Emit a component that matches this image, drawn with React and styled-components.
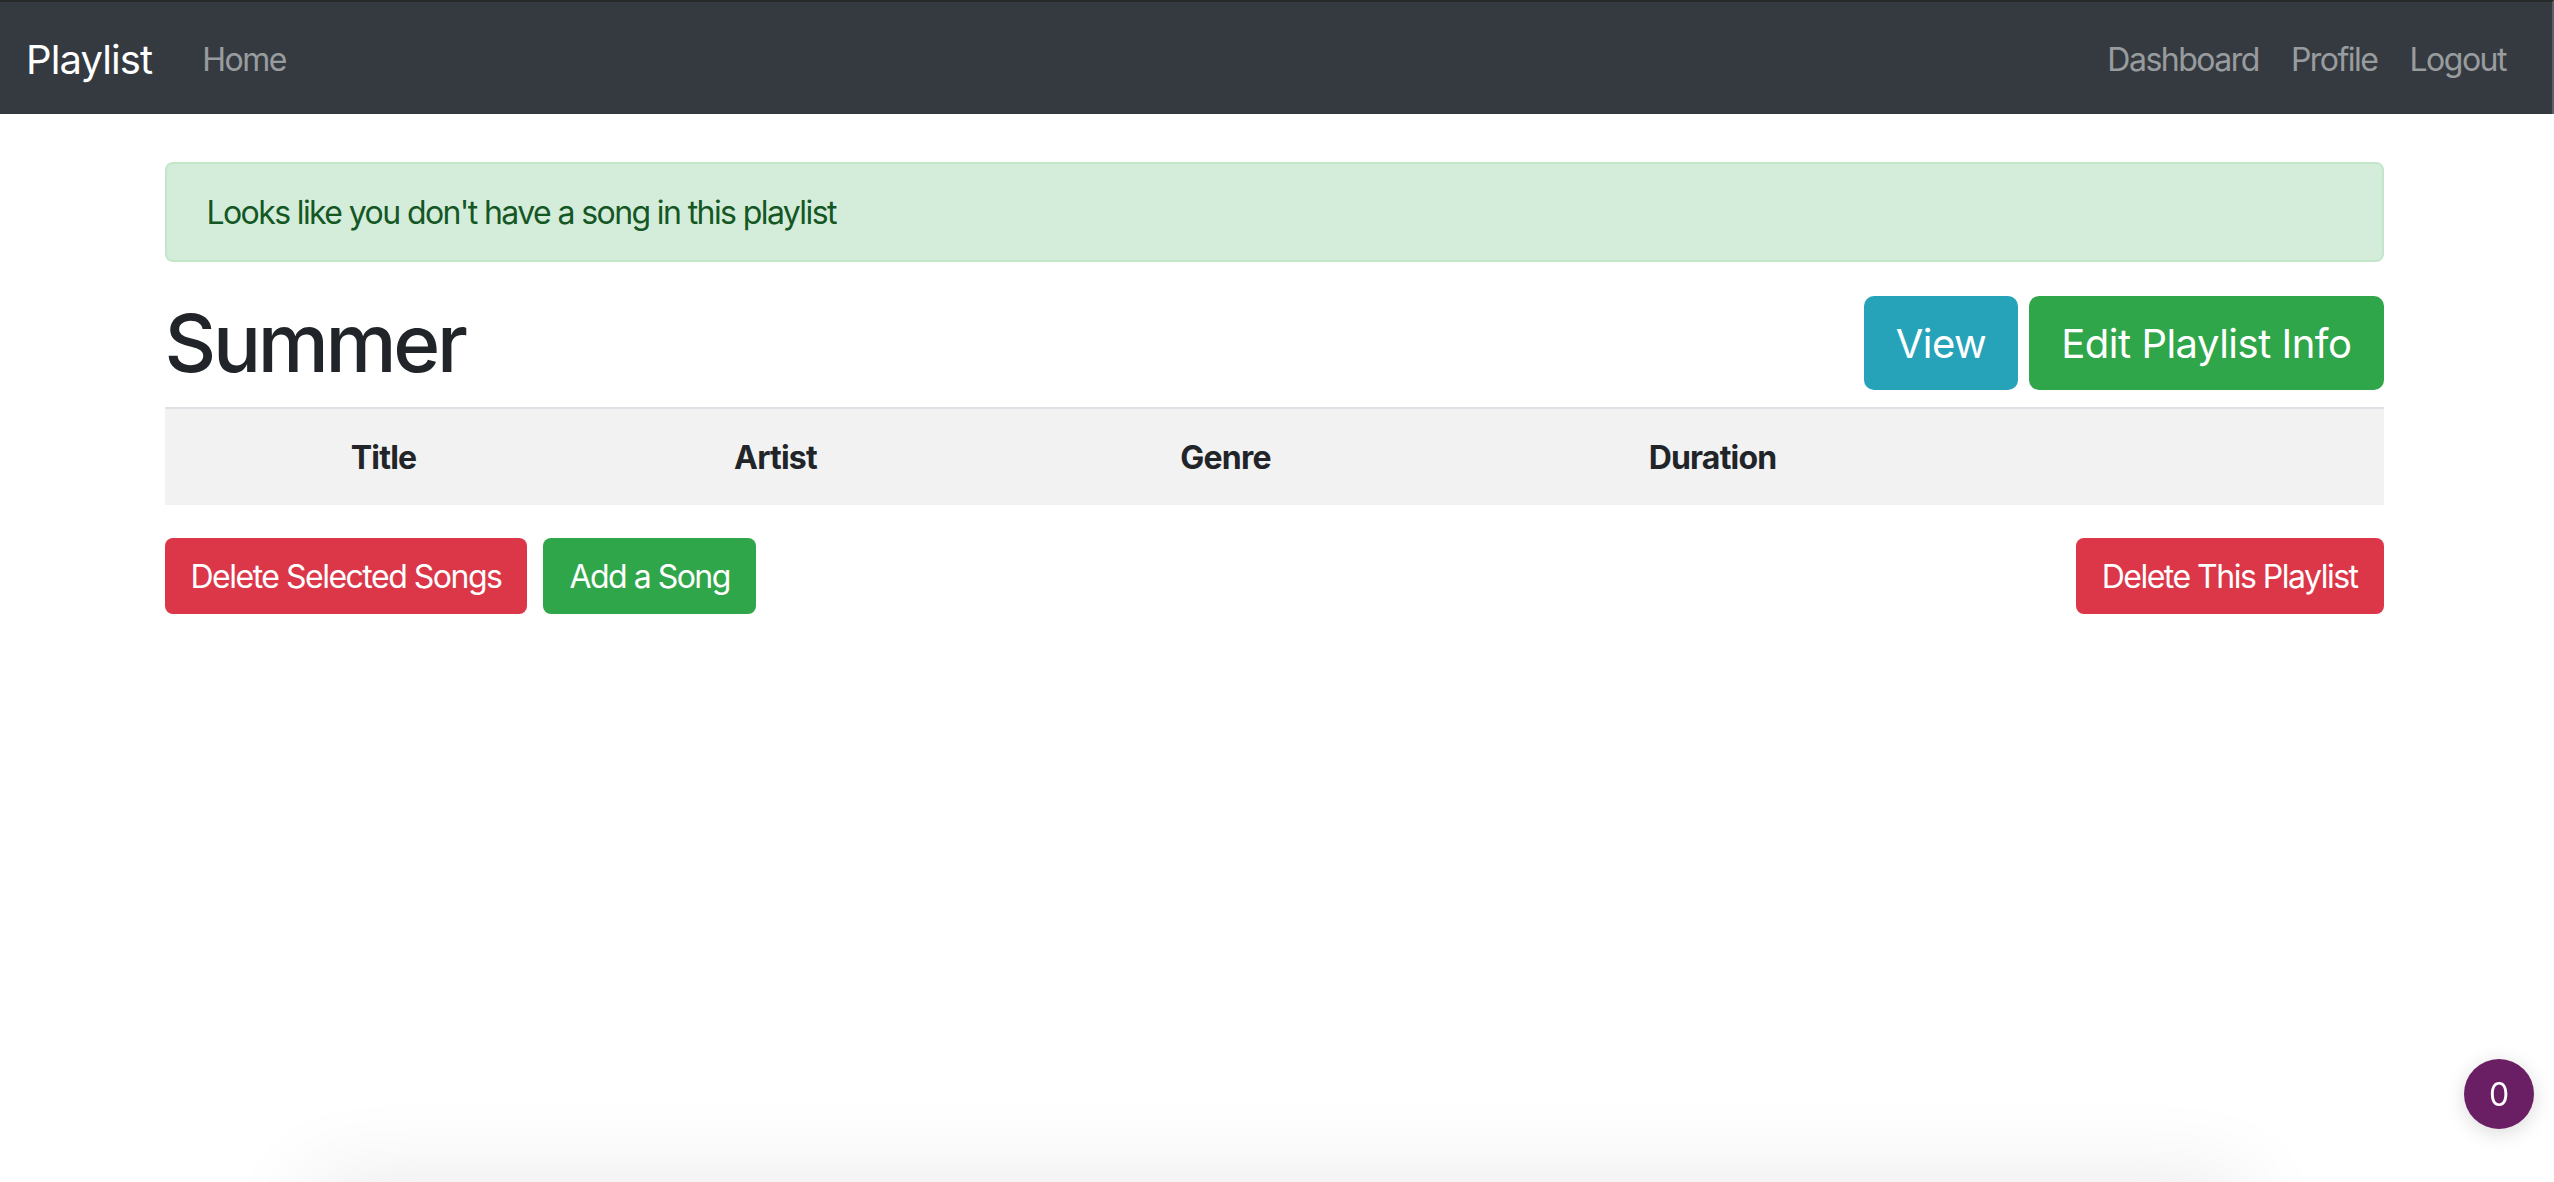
import React from 'react'
import styled, { createGlobalStyle } from 'styled-components'

const GlobalStyle = createGlobalStyle`
   html, body {
      margin: 0;
      padding: 0;
      background: #fff;
   }
   body {
      font-family: Inter, "Noto Sans", "Liberation Sans", sans-serif;
      color: #212529;
      overflow: hidden;
   }
   * {
      box-sizing: border-box;
   }
`

const columns = ['Title', 'Artist', 'Genre', 'Duration']

const App = () => {
   return (
      <>
         <GlobalStyle />
         <Navbar>
            <Brand>Playlist</Brand>
            <NavLink>Home</NavLink>
            <NavRight>
               <NavLink>Dashboard</NavLink>
               <NavLink>Profile</NavLink>
               <NavLink>Logout</NavLink>
            </NavRight>
         </Navbar>

         <Page>
            <Container>
               <Alert>Looks like you don't have a song in this playlist</Alert>

               <HeadRow>
                  <Heading>Summer</Heading>
                  <ButtonGroup gap="11px">
                     <Button variant="info" size="lg">View</Button>
                     <Button variant="success" size="lg">Edit Playlist Info</Button>
                  </ButtonGroup>
               </HeadRow>

               <TableHead>
                  {columns.map((each, i) => <HeadCell key={i}>{each}</HeadCell>)}
                  <HeadCell />
               </TableHead>

               <Actions>
                  <ButtonGroup gap="16px">
                     <Button variant="danger">Delete Selected Songs</Button>
                     <Button variant="success">Add a Song</Button>
                  </ButtonGroup>
                  <Button variant="danger">Delete This Playlist</Button>
               </Actions>
            </Container>
         </Page>

         <CartBadge>0</CartBadge>
         <FooterShadow />
      </>
   )
}

const colors = {
   info: '#26a3b8',
   success: '#30a64a',
   danger: '#db3749',
}

const Navbar = styled.nav`
   display: flex;
   align-items: center;
   height: 114px;
   padding: 3px 30px 0 26px;
   background-color: #343a40;
   border-top: 2px solid #262829;
   border-right: 2px solid #5c6065;
`

const Brand = styled.a`
   font-size: 40px;
   color: #fff;
   margin-right: 34px;
   line-height: 1;
   letter-spacing: -0.9px;
`

const NavLink = styled.a`
   font-size: 32px;
   color: rgba(255, 255, 255, 0.5);
   padding: 0 16px;
   line-height: 1;
   letter-spacing: -1.5px;
`

const NavRight = styled.div`
   display: flex;
   margin-left: auto;
`

const Page = styled.main`
   padding-right: 6px;
`

const Container = styled.div`
   width: 2219px;
   margin: 0 auto;
   padding-top: 48px;
`

const Alert = styled.div`
   background-color: #d4edda;
   border: 2px solid #c3e6cb;
   color: #155724;
   border-radius: 8px;
   padding: 26px 40px 24px;
   font-size: 32px;
   line-height: 46px;
   letter-spacing: -1.6px;
`

const HeadRow = styled.div`
   display: flex;
   justify-content: space-between;
   align-items: center;
   margin-top: 33px;
`

const Heading = styled.h1`
   margin: 0;
   font-size: 80px;
   font-weight: 500;
   letter-spacing: -3.3px;
   line-height: 96px;
`

const ButtonGroup = styled.div`
   display: flex;
   gap: ${({ gap }) => gap};
`

const Button = styled.button`
   font-family: inherit;
   color: #fff;
   border: none;
   cursor: pointer;
   background-color: ${({ variant }) => colors[variant]};
   font-size: ${({ size }) => size === 'lg' ? '40px' : '32px'};
   border-radius: ${({ size }) => size === 'lg' ? '10px' : '8px'};
   height: ${({ size }) => size === 'lg' ? '94px' : '76px'};
   padding: ${({ size }) => size === 'lg' ? '0 32px' : '0 26px'};
   letter-spacing: ${({ size }) => size === 'lg' ? '-0.5px' : '-1.5px'};
`

const TableHead = styled.div`
   display: grid;
   grid-template-columns: 438px 346px 554px 420px 1fr;
   margin-top: 16px;
   height: 98px;
   align-items: center;
   background-color: #f2f2f2;
   border-top: 2px solid #dee2e6;
`

const HeadCell = styled.div`
   text-align: center;
   font-size: 32px;
   font-weight: 700;
   letter-spacing: -0.8px;
`

const Actions = styled.div`
   display: flex;
   justify-content: space-between;
   margin-top: 33px;
`

const CartBadge = styled.div`
   position: fixed;
   right: 20px;
   top: 1059px;
   width: 70px;
   height: 70px;
   border-radius: 50%;
   background-color: #6a1e63;
   color: #fff;
   font-size: 32px;
   display: flex;
   align-items: center;
   justify-content: center;
   box-shadow: 0 4px 20px rgba(0, 0, 0, 0.15);
`

const FooterShadow = styled.div`
   position: fixed;
   top: 1200px;
   left: 330px;
   right: 330px;
   height: 100px;
   box-shadow: 0 0 90px 20px rgba(0, 0, 0, 0.09);
`

export default App
